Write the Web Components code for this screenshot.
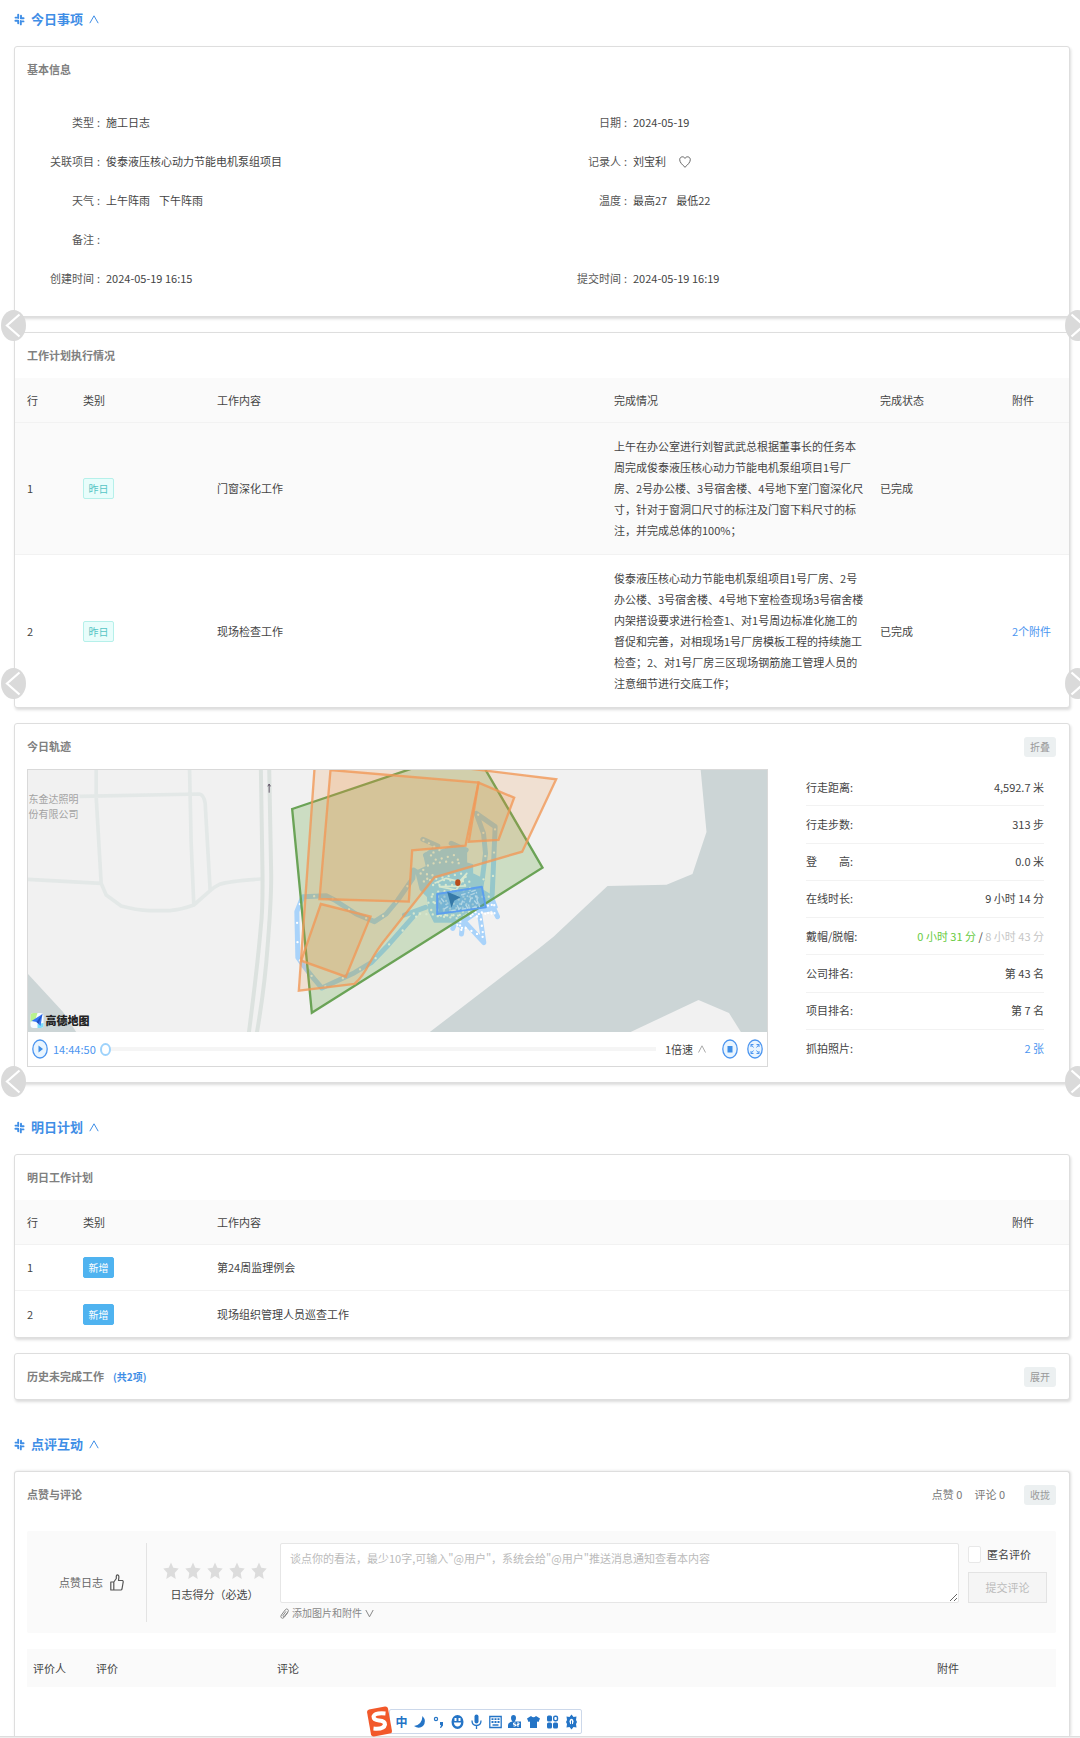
<!DOCTYPE html>
<html lang="zh-CN">
<head>
<meta charset="utf-8">
<title>施工日志</title>
<style>
body{margin:0;background:#fff;color:#444;font:11px/21px "Noto Sans CJK SC",sans-serif}
</style>
</head>
<body>
<log-page></log-page>
<script>
const base = '*{box-sizing:border-box}button,input,select,textarea{font:inherit;color:inherit}button{cursor:pointer}svg{display:block}';
const define = (name, css, html, setup) => customElements.define(name, class extends HTMLElement {
  constructor() {
    super();
    const root = this.attachShadow({mode: 'open'});
    root.innerHTML = `<style>${base}${css}</style>${typeof html === 'function' ? html(this) : html}`;
    if (setup) setup(root, this);
  }
});

define('section-heading', `
:host{display:block;margin-bottom:14px;color:#3f8ee6}
h2{display:flex;align-items:center;margin:0;height:26px;font-size:13px;line-height:26px;font-weight:700}
.mark{margin-right:6px}
button{display:flex;border:0;background:none;padding:0;margin-left:6px}
`, `
<h2><svg class="mark" width="11" height="13" viewBox="0 0 11 13" fill="none" stroke="currentColor" stroke-width="1.900" stroke-linecap="round"><path d="M4.200 1.600V5M1.500 4.600H2.500M7 2.800V4.600M6.800 5.200H9.600M4.200 10.200V8.400M1.400 7.800H4.200M6.800 8V11.400M8.500 8.400H9.500"/></svg>
<slot></slot><button aria-label="收起"><svg width="10" height="9" viewBox="0 0 10 9" fill="none" stroke="currentColor" stroke-width="1"><path d="M.8 8.200 5 .8 9.200 8.200"/></svg></button></h2>`);

define('log-card', `
:host{display:block;margin-bottom:15px;border:1px solid #dedede;border-radius:3px;background:#fff;box-shadow:1px 2px 3px rgba(0,0,0,.14)}
:host([last]){margin-bottom:31px}
:host([open-end]){margin-bottom:0;border-bottom:0;border-radius:3px 3px 0 0;padding-bottom:49px;box-shadow:1px 0 3px rgba(0,0,0,.14)}
header{display:flex;align-items:center;height:45px;padding:0 13px 0 12px}
h3{margin:0;font-size:11px;font-weight:700;color:#808080}
.note{margin-left:9px;flex:1}
`, `
<header><h3><slot name="title"></slot></h3><div class="note"><slot name="note"></slot></div><slot name="extra"></slot></header><slot></slot>`);

define('mini-button', `
:host{display:block}
button{display:block;width:32px;height:20px;border:0;border-radius:3px;background:#ecf0f1;color:#999;font-size:10px;line-height:20px;padding:0;text-align:center}
`, '<button><slot></slot></button>');

define('info-item', `
:host{display:flex;height:39px;line-height:39px}
.label{width:85px;flex:none;text-align:right;color:#555}
.label::after{content:":";margin:0 0 0 3px}
.value{display:flex;align-items:center;gap:9px;margin-left:6px}
`, el => `<span class="label">${el.getAttribute('label')}</span><span class="value"><slot></slot></span>`);

define('basic-info', `
:host{display:grid;grid-template-columns:1fr 1fr;padding:11px 0 18px}
.left{grid-column:1}
svg{margin-left:4px}
`, `
<info-item label="类型">施工日志</info-item><info-item label="日期">2024-05-19</info-item>
<info-item label="关联项目">俊泰液压核心动力节能电机泵组项目</info-item><info-item label="记录人"><span>刘宝利</span><svg width="12" height="12" viewBox="0 0 12 12" fill="none" stroke="#666" stroke-width="1"><path d="M6 11.300C3.500 8.800.7 6.500.7 3.700.7.500 4.700-.2 6 2.400 7.300-.2 11.300.5 11.300 3.700 11.300 6.500 8.500 8.800 6 11.300Z"/></svg></info-item>
<info-item label="天气"><span>上午阵雨</span><span>下午阵雨</span></info-item><info-item label="温度"><span>最高27</span><span>最低22</span></info-item>
<info-item label="备注"></info-item>
<info-item class="left" label="创建时间">2024-05-19 16:15</info-item><info-item label="提交时间">2024-05-19 16:19</info-item>`);

define('type-tag', `
:host{display:block;width:31px;height:21px;border:1px solid #b5f0ea;border-radius:2px;background:#e8fdfb;color:#55c5c5;font-size:10px;line-height:19px;text-align:center}
:host([solid]){background:#4fb3f0;border-color:#4fb3f0;color:#fff}
`, '<slot></slot>');

const tableCss = `
:host{display:block}
table{width:100%;table-layout:fixed;border-collapse:separate;border-spacing:0}
th,td{height:46px;padding:12px 4px 12px 12px;text-align:left;font-weight:400;border-bottom:1px solid #f2f2f2;vertical-align:middle}
th{height:45px;padding-top:0;padding-bottom:0;background:#fafafa}
tbody tr:last-child td{border-bottom:0}
a{color:#4b95f0;text-decoration:none}
.c1{width:56px}.c2{width:134px}.c4{width:266px}.c5{width:132px}.c6{width:69px}
`;
define('progress-table', tableCss + `
td{padding-top:13px;padding-bottom:13px}
tbody tr:nth-child(odd) td{background:#fafafa}
`, `
<table><thead><tr><th class="c1">行</th><th class="c2">类别</th><th>工作内容</th><th class="c4">完成情况</th><th class="c5">完成状态</th><th class="c6">附件</th></tr></thead>
<tbody>
<tr><td>1</td><td><type-tag>昨日</type-tag></td><td>门窗深化工作</td><td>上午在办公室进行刘智武武总根据董事长的任务本周完成俊泰液压核心动力节能电机泵组项目1号厂房、2号办公楼、3号宿舍楼、4号地下室门窗深化尺寸，针对于窗洞口尺寸的标注及门窗下料尺寸的标注，并完成总体的100%；</td><td>已完成</td><td></td></tr>
<tr><td>2</td><td><type-tag>昨日</type-tag></td><td>现场检查工作</td><td>俊泰液压核心动力节能电机泵组项目1号厂房、2号办公楼、3号宿舍楼、4号地下室检查现场3号宿舍楼内架搭设要求进行检查1、对1号周边标准化施工的督促和完善，对相现场1号厂房模板工程的持续施工检查；2、对1号厂房三区现场钢筋施工管理人员的注意细节进行交底工作；</td><td>已完成</td><td><a href="#files">2个附件</a></td></tr>
</tbody></table>`);
define('tomorrow-table', tableCss, `
<table><thead><tr><th class="c1">行</th><th class="c2">类别</th><th>工作内容</th><th class="c6">附件</th></tr></thead>
<tbody>
<tr><td>1</td><td><type-tag solid>新增</type-tag></td><td>第24周监理例会</td><td></td></tr>
<tr><td>2</td><td><type-tag solid>新增</type-tag></td><td>现场组织管理人员巡查工作</td><td></td></tr>
</tbody></table>`);

define('track-map', `
:host{display:block;border:1px solid #d9d9d9;min-width:0}
.map{width:100%;height:262px;background:#f1f1f1}
.map text{font-family:"Noto Sans CJK SC",sans-serif}
.bar{display:flex;align-items:center;height:34px;padding:0 4px;background:#fff}
.icon{display:block;border:0;background:none;padding:0}
.time{margin:0 4px 0 5px;color:#4b95f0}
input{appearance:none;flex:1;min-width:0;height:12px;margin:0;background:linear-gradient(#f5f5f5,#f5f5f5) center/100% 4px no-repeat}
input::-webkit-slider-thumb{appearance:none;width:11px;height:13px;border:2px solid #9dd2fb;border-radius:50%;background:#fff}
select{appearance:none;border:0;background:none;padding:0;margin:0 5px 0 9px;width:28px;height:21px}
.up{margin-right:16px}
.stop{margin-right:9px}
`, `
<svg class="map" viewBox="28 770 740 262" preserveAspectRatio="xMidYMid slice">
<g transform="translate(0 710) scale(.333333)">
<path fill="#ccd5d6" d="M80 786 190 905 232 969H80Z"/>
<g fill="none" stroke="#e3e8e7" stroke-width="11" stroke-linejoin="round">
<path d="M290 170V260L305 520 320 555 365 588Q410 600 450 602H510Q545 599 583 585L632 542Q645 530 660 523 690 513 785 507M80 508 305 520M240 259 600 252Q613 254 617 280L632 542M570 170 575 400 583 585"/>
<g stroke="#dce2df" stroke-width="12"><path d="M784 170 789 490Q790 600 784 650 775 760 748 969M809 170 815 490Q816 560 805 700 796 830 772 969"/></g></g>
<path d="M809 248V222M805 229 809 222 813 229" fill="none" stroke="#64586a" stroke-width="3"/>
</g>
<path fill="#ccd5d6" d="M701 768 707 832 693 874 667 884.700 608 886 554 936.700 540 948 429 1033H629L699 1000 729.500 1013 742 1033H769V768Z"/>
<g transform="translate(260 750) scale(.333333)" stroke-linejoin="round">
<g fill="none" stroke="#a9d3fa" stroke-width="15" stroke-linecap="round">
<path d="M498 472 435 495M470 490 380 592 335 638 285 668 187 714Q140 660 115 622L112 485 130 440 200 437 225 450 290 492 345 515 380 492 415 450 460 385 462 360M668 390 678 310 672 250 650 190 707 230 698 435M490 268 535 288M700 470 714 500M606 505 673 578 660 490M580 535 590 510M606 552 612 500M575 280 620 300M498 315 520 350M465 362 500 385"/>
<path fill="#a9d3fa" stroke-width="6" d="M470 365 502 350 494 315 520 295 545 302 575 290 620 302V340L638 345V372L672 388 668 420 700 440 712 472 690 482 660 486 622 512 600 530 580 515 525 515 510 485 505 440 483 418Z"/></g>
<g fill="none" stroke="#fff" stroke-width="7" stroke-linecap="round">
<path stroke-dasharray="0 58" d="M470 500 380 592 335 638 285 668 187 714Q140 660 115 622L112 485 130 440 200 437 225 450 290 492 345 515 380 492 415 450 460 385"/>
<path stroke-dasharray="0 70" d="M672 388 678 310 672 250 650 190 707 230 698 435"/>
<path stroke-dasharray="0 19" d="M492 270 540 300 510 312 530 330 585 315 603 340 560 335 510 342 480 370 520 375 490 395 560 380 610 370 630 395 550 390 520 405 620 405 640 420 530 425 510 440 620 440 690 440 505 458 600 462 710 465 515 480 620 485 710 490 530 498 600 505 610 545 590 520 640 545 672 562 663 500 450 490"/></g>
<path fill="none" stroke="#fff" stroke-width="5" d="M525 400 560 385 600 395 622 370 590 420 540 410 620 408"/>
<path fill="rgba(95,165,60,.25)" stroke="#6aa356" stroke-width="7" stroke-linejoin="miter" d="M98 177 640-6 849 353 157 788Z"/>
<g fill="rgba(240,140,60,.17)" stroke="rgba(241,152,88,.8)" stroke-width="7" stroke-linejoin="miter">
<path d="M169-1 118 722 285 702Q310 680 330 640 355 595 380 565L525 382 788 305 890 88Z"/>
<path d="M213 60 657 98 618 287 458 301 448 455 180 447Z"/>
<path d="M657 98 764 143 717 270 628 275Z"/>
<path d="M184 462 333 500 259 680 125 632Z"/></g>
<path fill="rgba(64,145,230,.35)" stroke="#5c9fee" stroke-width="6" d="M533 432 667 410 679 472 533 492Z"/>
<path fill="none" stroke="#b4d7e6" stroke-width="4" stroke-dasharray="14 7 5 6" d="M545 445 565 470 550 480M605 435 650 420 655 465 635 440 625 475 610 450 600 480 590 460M575 482 660 470 645 430 620 440"/>
<path fill="#3579a8" d="M563 425 603 442 584 452 576 473Z"/>
<ellipse cx="595" cy="398" rx="8" ry="10" fill="#b84d1c"/>
</g>
<g font-size="10" fill="#a3a3a3"><text x="29" y="803">东金达照明</text><text x="29" y="818">份有限公司</text></g>
<g><rect x="31" y="1013" width="13" height="15" rx="3" fill="#f7fbff"/><path fill="#b9f28e" d="M31 1016q0-3 3-3h4l-2 6-5 3Z"/><path fill="#7fdcf8" d="m38 1024 6-1v2q0 3-3 3h-3Z"/><path fill="#3577f4" d="m32 1021 11-7-2 12-4-4Z"/><path fill="#1f50c0" d="m37 1022 6-8-4 10Z"/></g>
<text x="46" y="1025" font-size="11" font-weight="900" fill="#222">高德地图</text>
</svg>
<div class="bar">
<button class="icon" aria-label="播放"><svg width="16" height="20" viewBox="0 0 16 20"><ellipse cx="8" cy="10" rx="7.200" ry="9" fill="#e9f5ff" stroke="#4b95f0" stroke-width="1.300"/><path fill="#3f8ee6" d="m6.500 6.500 4.500 3.500-4.500 3.500Z"/></svg></button>
<span class="time">14:44:50</span>
<input type="range" min="0" max="100" value="0" aria-label="播放进度">
<select aria-label="播放速度"><option>1倍速</option></select>
<svg class="up" width="8" height="8" viewBox="0 0 8 8" fill="none" stroke="#aaa"><path d="M.5 7.500 4 .8 7.500 7.500"/></svg>
<button class="icon stop" aria-label="停止"><svg width="16" height="20" viewBox="0 0 16 20"><ellipse cx="8" cy="10" rx="7.200" ry="9" fill="#e9f5ff" stroke="#4b95f0" stroke-width="1.300"/><path fill="#3f8ee6" d="M5.500 7h5v6.500h-5z"/></svg></button>
<button class="icon" aria-label="全屏"><svg width="16" height="20" viewBox="0 0 16 20"><ellipse cx="8" cy="10" rx="7.200" ry="9" fill="#e9f5ff" stroke="#4b95f0" stroke-width="1.300"/><path fill="none" stroke="#4b95f0" d="M6.500 8.500 4 5.500M4 8V5.500H6.500M9.500 8.500 12 5.500M12 8V5.500H9.500M6.500 11.500 4 14.500M4 12V14.500H6.500M9.500 11.500 12 14.500M12 12V14.500H9.500"/></svg></button>
</div>`);

define('stat-row', `
:host{display:flex;align-items:center;justify-content:space-between;border-bottom:1px solid #f2f2f2}
:host(:last-child){border-bottom:0}
`, el => `<span>${el.getAttribute('label')}:</span><span><slot></slot></span>`);

define('track-panel', `
:host{display:flex;padding:0 12px 15px}
track-map{flex:1}
.stats{display:grid;grid-auto-rows:1fr;width:238px;margin:0 13px 0 38px}
.on{color:#67cb41}.off{color:#c6c6c6}
a{color:#4b95f0;text-decoration:none}
`, `
<track-map></track-map>
<div class="stats">
<stat-row label="行走距离">4,592.7 米</stat-row><stat-row label="行走步数">313 步</stat-row>
<stat-row label="登　　高">0.0 米</stat-row><stat-row label="在线时长">9 小时 14 分</stat-row>
<stat-row label="戴帽/脱帽"><span class="on">0 小时 31 分</span> / <span class="off">8 小时 43 分</span></stat-row>
<stat-row label="公司排名">第 43 名</stat-row><stat-row label="项目排名">第 7 名</stat-row>
<stat-row label="抓拍照片"><a href="#photos">2 张</a></stat-row>
</div>`);

const star = '<button aria-label="评分"><svg width="16" height="18" viewBox="0 0 16 18"><path fill="#dcdcdc" d="m8 .5 2.300 5.300 5.400.8-4 4.300 1 6.100L8 14.100 3.300 17l1-6.100-4-4.300 5.400-.8Z"/></svg></button>';
define('review-form', `
:host{display:flex;height:102px;margin:14px 13px 0 12px;padding:12px 9px 11px 0;background:#fafafa;border-radius:2px}
button{border:0;background:none;padding:0}
.like{display:flex;align-items:center;justify-content:center;gap:7px;width:120px;border-right:1px solid #e3e3e3;color:#666;padding-left:10px}
.score{width:133px;display:flex;flex-direction:column;align-items:center;padding:18px 0 0 2px}
.stars{display:flex;gap:6px;height:20px;align-items:center}
.score span{margin-top:3px}
.write{flex:1;min-width:0}
textarea{display:block;width:100%;height:60px;border:1px solid #e6e6e6;border-radius:2px;padding:4px 9px;background:#fff;outline:0}
textarea::placeholder{color:#bbb}
.attach{display:flex;align-items:center;gap:3px;height:20px;font-size:10px;line-height:20px;color:#888}
.send{width:79px;margin:0 0 0 9px}
.hide{display:flex;align-items:center;height:22px;gap:6px}
.hide input{appearance:none;width:13px;height:17px;margin:0;border:1px solid #e8e8e8;border-radius:2px;background:#fff}
.send button{display:block;width:100%;height:31px;margin-top:7px;border:1px solid #e3e3e3;background:#f5f5f5;color:#bbb}
`, `
<button class="like">点赞日志<svg width="14" height="17" viewBox="0 0 14 17" fill="none" stroke="#555" stroke-width="1.200" stroke-linejoin="round"><path d="M.8 8H3.800V16H.8ZM3.800 8 6.300 4.500V2Q6.500.7 7.500.8 9 1 8.900 3L8.500 6.500H12.500Q13.500 7 13.100 8.500L12 15Q11.700 16 10.800 16H3.800"/></svg></button>
<div class="score"><div class="stars">${star.repeat(5)}</div><span>日志得分（必选）</span></div>
<div class="write"><textarea aria-label="评论内容" placeholder='谈点你的看法，最少10字,可输入"@用户"，系统会给"@用户"推送消息通知查看本内容'></textarea>
<button class="attach"><svg width="9" height="11" viewBox="0 0 9 11" fill="none" stroke="#888"><path d="m7.800 4.500-3.800 5Q2.500 11 1.200 9.600.3 8.500 1.400 7L5.200 1.900Q6.500.3 7.700 1.300 9 2.500 7.900 4L4.500 8.300Q3.500 9 3 8.200 2.700 7.700 3.300 7L6 3.400"/></svg>添加图片和附件<svg width="9" height="9" viewBox="0 0 9 9" fill="none" stroke="#888"><path d="M.8 1 4.500 7.800 8.200 1"/></svg></button></div>
<div class="send"><label class="hide"><input type="checkbox">匿名评价</label><button disabled>提交评论</button></div>`);

define('comment-table', `
:host{display:block;margin:16px 13px 0 12px}
table{width:100%;table-layout:fixed;border-spacing:0}
th{height:38px;padding:0 0 0 6px;background:#fafafa;text-align:left;font-weight:400}
.who{width:63px}.rate{width:181px}.file{width:125px}
`, '<table><thead><tr><th class="who">评价人</th><th class="rate">评价</th><th>评论</th><th class="file">附件</th></tr></thead></table>');

define('page-arrow', `
:host{display:block;width:25px;height:31px}
:host([next]) svg{transform:scaleX(-1)}
button{display:block;border:0;padding:0;background:none}
`, el => `<button aria-label="${el.hasAttribute('next') ? '下一篇' : '上一篇'}"><svg width="25" height="31" viewBox="0 0 25 31"><ellipse cx="12.500" cy="15.500" rx="12.500" ry="15.500" fill="#dadada"/><path d="M18.500 4.500 6 15.500 18.500 26.500" fill="none" stroke="#fff" stroke-width="2.200"/></svg></button>`);

define('ime-bar', `
:host{display:flex;align-items:center;width:193px;height:25px;padding-left:4px;background:#fff;border:1px solid #ccd8ea;border-radius:2px;color:#2474c6}
svg{width:19px;height:18px;flex:none}
b{width:19px;text-align:center;font-size:12px;line-height:18px}
.logo{width:27px;height:31px;margin-left:-28px}
`, `
<svg class="logo" viewBox="0 0 27 31"><path fill="#f2592b" d="M1 6Q1 4 3 3.500L19 .5Q21.500.3 22 2.500L26 25Q26.300 27 24 27.500L8 30.500Q5.500 30.700 5 28.500Z"/><path d="M19.500 7.500Q9 6.500 7.500 10.500 7.500 14 13 14.500 19 15 19 18.500 18 23.500 7.500 22.500" fill="none" stroke="#fff" stroke-width="4"/></svg>
<b>中</b>
<svg viewBox="0 0 19 18"><path fill="currentColor" d="M12.500 3Q17 8 13 13 9 16.500 4 13 12 12 12.500 3Z"/></svg>
<svg viewBox="0 0 19 18"><circle cx="7" cy="6" r="1.600" fill="none" stroke="currentColor" stroke-width="1.200"/><path fill="currentColor" d="M11 9h3v3.500L12 15h-1l1-3h-1Z"/></svg>
<svg viewBox="0 0 19 18"><ellipse cx="9.500" cy="9" rx="6" ry="7" fill="currentColor"/><path fill="#fff" d="M6.500 5h2v3h-2zM10.500 5h2v3h-2zM5.800 9.500h7.400Q12.500 13.500 9.500 13.500T5.800 9.500Z"/></svg>
<svg viewBox="0 0 19 18"><rect x="7.500" y="1.500" width="4" height="9" rx="2" fill="currentColor"/><path fill="none" stroke="currentColor" stroke-width="1.300" d="M5 7.500Q5 12.500 9.500 12.500T14 7.500M9.500 12.500V16"/></svg>
<svg viewBox="0 0 19 18"><path fill="none" stroke="currentColor" stroke-width="1.300" d="M3.800 3.500H15.200V14.500H3.800Z"/><path fill="none" stroke="currentColor" stroke-width="1.800" stroke-dasharray="2 1" d="M5.500 6.200H14M5.500 9H14"/><path stroke="currentColor" stroke-width="1.500" d="M6.500 12H12.500"/></svg>
<svg viewBox="0 0 19 18"><path fill="currentColor" d="M8.500 2Q11 2 11 5 11 7 9.500 8.500H16V15H3V12Q3 9.500 7.500 8.500 6 7 6 5 6 2 8.500 2Z"/><path fill="none" stroke="#fff" d="M10.500 10H8.500V11.500H10.500V13H8.500M12 10H14V11.500H12V13H14"/></svg>
<svg viewBox="0 0 19 18"><path fill="currentColor" d="M7 3Q9.500 5.500 12 3L16 5.500 14.500 9 13 8.500V15H6V8.500L4.500 9 3 5.500Z"/></svg>
<svg viewBox="0 0 19 18"><rect x="4" y="2.500" width="5" height="6" rx="1.500" fill="currentColor"/><rect x="4" y="9.500" width="5" height="6" rx="1.500" fill="currentColor"/><rect x="10" y="9.500" width="5" height="6" rx="1.500" fill="currentColor"/><rect x="10.700" y="3.200" width="3.800" height="4.600" rx="1.500" fill="none" stroke="currentColor" stroke-width="1.400"/></svg>
<svg viewBox="0 0 19 18"><path fill="currentColor" d="m9.500 1.500 2 2.500 3-.5-.5 3.500 1 2-1 2 .5 3.500-3-.5-2 2.500-2-2.500-3 .5.500-3.500-1-2 1-2L4.500 3.500l3 .5Z"/><ellipse cx="9.500" cy="8.500" rx="2" ry="2.700" fill="#fff"/><path stroke="currentColor" d="M9.500 7.500V13"/></svg>`);

define('log-page', `
:host{display:block;position:relative;overflow:hidden}
main{padding:6px 10px 0 14px}
footer{height:2px;background:#eee;border-top:1px solid #ddd}
.count{color:#3f8ee6;font-size:10px;font-weight:700}
.meta{display:flex;gap:12px;color:#777;margin-right:19px}
.extra{display:flex;align-items:center}
page-arrow{position:absolute;left:1px}
page-arrow[next]{left:auto;right:-10px}
.p1{top:310px}.p2{top:668px}.p3{top:1066px}
ime-bar{position:absolute;left:389px;bottom:4px}
`, `
<main>
<section-heading>今日事项</section-heading>
<log-card><span slot="title">基本信息</span><basic-info></basic-info></log-card>
<log-card><span slot="title">工作计划执行情况</span><progress-table></progress-table></log-card>
<log-card last><span slot="title">今日轨迹</span><mini-button slot="extra">折叠</mini-button><track-panel></track-panel></log-card>
<section-heading>明日计划</section-heading>
<log-card><span slot="title">明日工作计划</span><tomorrow-table></tomorrow-table></log-card>
<log-card last><span slot="title">历史未完成工作</span><span class="count" slot="note">(共2项)</span><mini-button slot="extra">展开</mini-button></log-card>
<section-heading>点评互动</section-heading>
<log-card open-end><span slot="title">点赞与评论</span><div class="extra" slot="extra"><div class="meta"><span>点赞 0</span><span>评论 0</span></div><mini-button>收拢</mini-button></div>
<review-form></review-form><comment-table></comment-table></log-card>
</main>
<footer></footer>
<page-arrow class="p1"></page-arrow><page-arrow class="p1" next></page-arrow>
<page-arrow class="p2"></page-arrow><page-arrow class="p2" next></page-arrow>
<page-arrow class="p3"></page-arrow><page-arrow class="p3" next></page-arrow>
<ime-bar></ime-bar>`);
</script>
</body>
</html>
